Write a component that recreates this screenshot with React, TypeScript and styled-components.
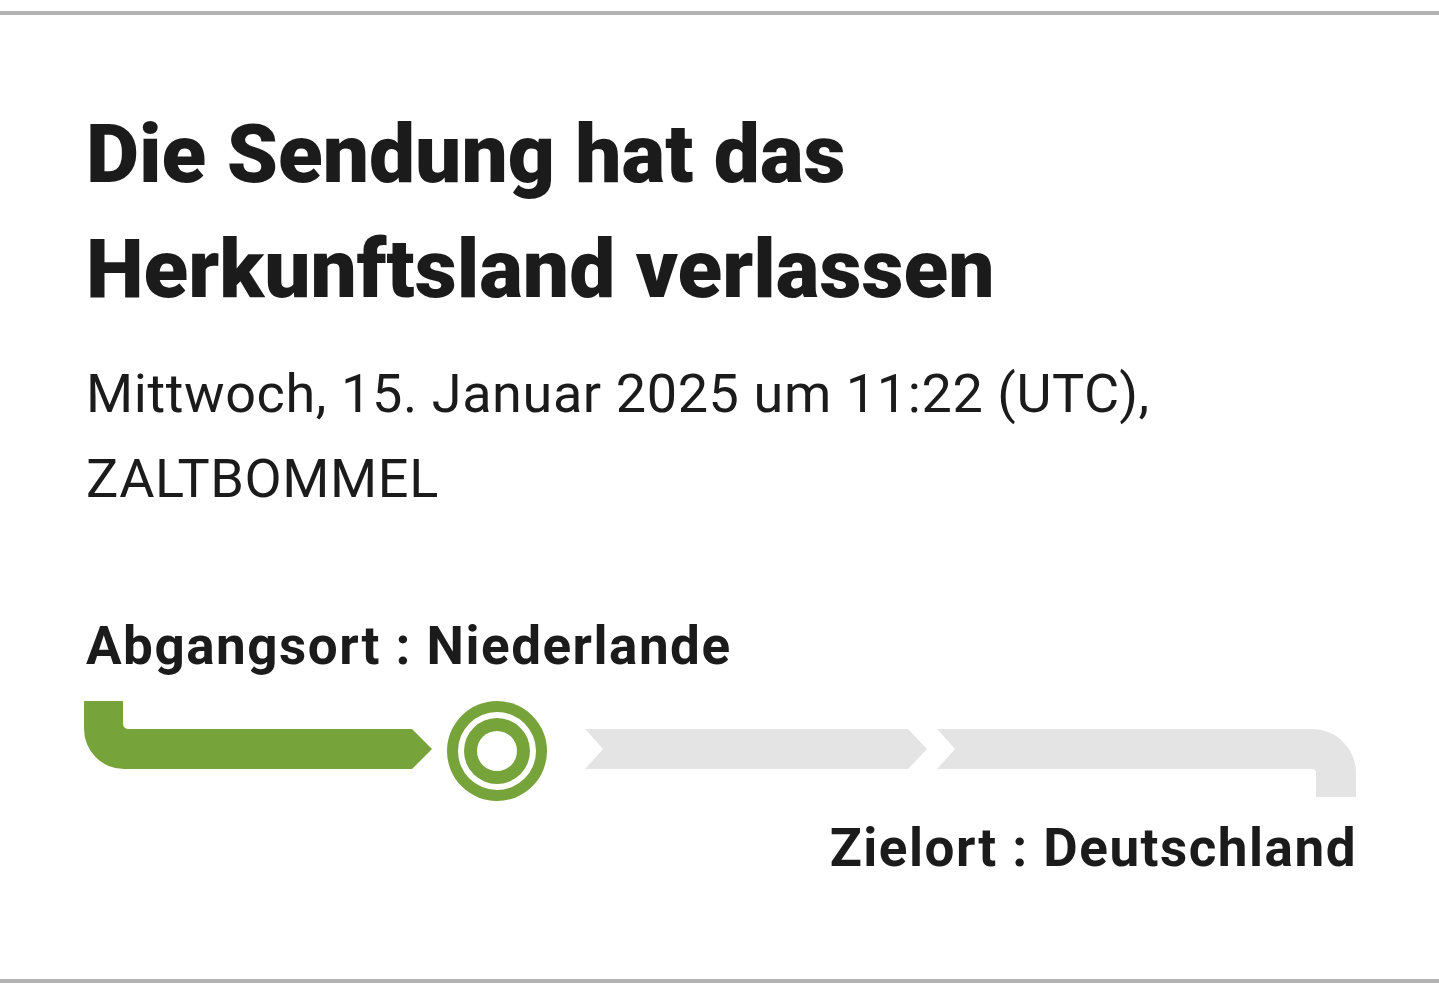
import React from 'react';
import styled, { createGlobalStyle } from 'styled-components';

const GlobalStyle = createGlobalStyle`
  html, body {
    margin: 0;
    padding: 0;
    background: #ffffff;
  }
  body {
    font-family: Roboto, "Liberation Sans", Arial, sans-serif;
    color: #1b1b1b;
  }
`;

// -- Styled Components --

const Page = styled.div`
  width: 1439px;
  height: 985px;
  padding-top: 11px;
  box-sizing: border-box;
`;

const Card = styled.section`
  border-top: 4px solid #b3b3b3;
  border-bottom: 4px solid #b3b3b3;
  padding: 82px 83px 97px 86px;
  display: flex;
  flex-direction: column;
  height: 972px;
  box-sizing: border-box;
`;

const Title = styled.h1`
  margin: 0;
  font-size: 82px;
  line-height: 115px;
  font-weight: 900;
  letter-spacing: 0;
`;

const Meta = styled.p`
  margin: 24px 0 0;
  font-size: 54px;
  line-height: 85px;
  font-weight: 400;
  letter-spacing: 0.6px;
`;

const Place = styled.div<{ $align?: 'left' | 'right' }>`
  font-size: 53px;
  line-height: 64px;
  font-weight: 700;
  letter-spacing: 1.5px;
  text-align: ${p => (p.$align === 'right' ? 'right' : 'left')};
`;

const Origin = styled(Place)`
  margin-top: 93px;
`;

const Destination = styled(Place)`
  margin-top: 15px;
  margin-right: -1px;
`;

const Track = styled.div`
  margin-top: 23px;
  margin-left: -2px;
  display: flex;
  align-items: flex-start;
  height: 100px;
`;

const Segment = styled.svg<{ $gap?: number }>`
  display: block;
  flex: none;
  height: 100px;
  margin-left: ${p => p.$gap || 0}px;
`;

const GREEN = '#77a33b';
const GREY = '#e4e4e4';

// -- Component --

const App: React.FC = () => {
  return (
    <Page>
      <GlobalStyle />
      <Card>
        <Title>
          Die Sendung hat das
          <br />
          Herkunftsland verlassen
        </Title>
        <Meta>
          Mittwoch, 15. Januar 2025 um 11:22 (UTC),
          <br />
          ZALTBOMMEL
        </Meta>

        <Origin>Abgangsort : Niederlande</Origin>

        <Track>
          <Segment width={348} viewBox="0 0 348 100">
            <path
              d="M0 0 H39 V22 Q39 28 45 28 H328 L348 48 L328 68 H40 A40 40 0 0 1 0 28 Z"
              fill={GREEN}
            />
          </Segment>
          <Segment width={100} viewBox="0 0 100 100" $gap={15}>
            <circle cx={50} cy={50} r={50} fill={GREEN} />
            <circle cx={50} cy={50} r={39} fill="#fff" />
            <circle cx={50} cy={50} r={33} fill={GREEN} />
            <circle cx={50} cy={50} r={20} fill="#fff" />
          </Segment>
          <Segment width={342} viewBox="0 0 342 100" $gap={38}>
            <path d="M0 28 H323 L342 48 L323 68 H0 L18 48 Z" fill={GREY} />
          </Segment>
          <Segment width={419} viewBox="0 0 419 100" $gap={10}>
            <path
              d="M0 28 H375 A44 44 0 0 1 419 72 V96 H379 V72 Q379 68 375 68 H0 L18 48 Z"
              fill={GREY}
            />
          </Segment>
        </Track>

        <Destination $align="right">Zielort : Deutschland</Destination>
      </Card>
    </Page>
  );
};

export default App;
